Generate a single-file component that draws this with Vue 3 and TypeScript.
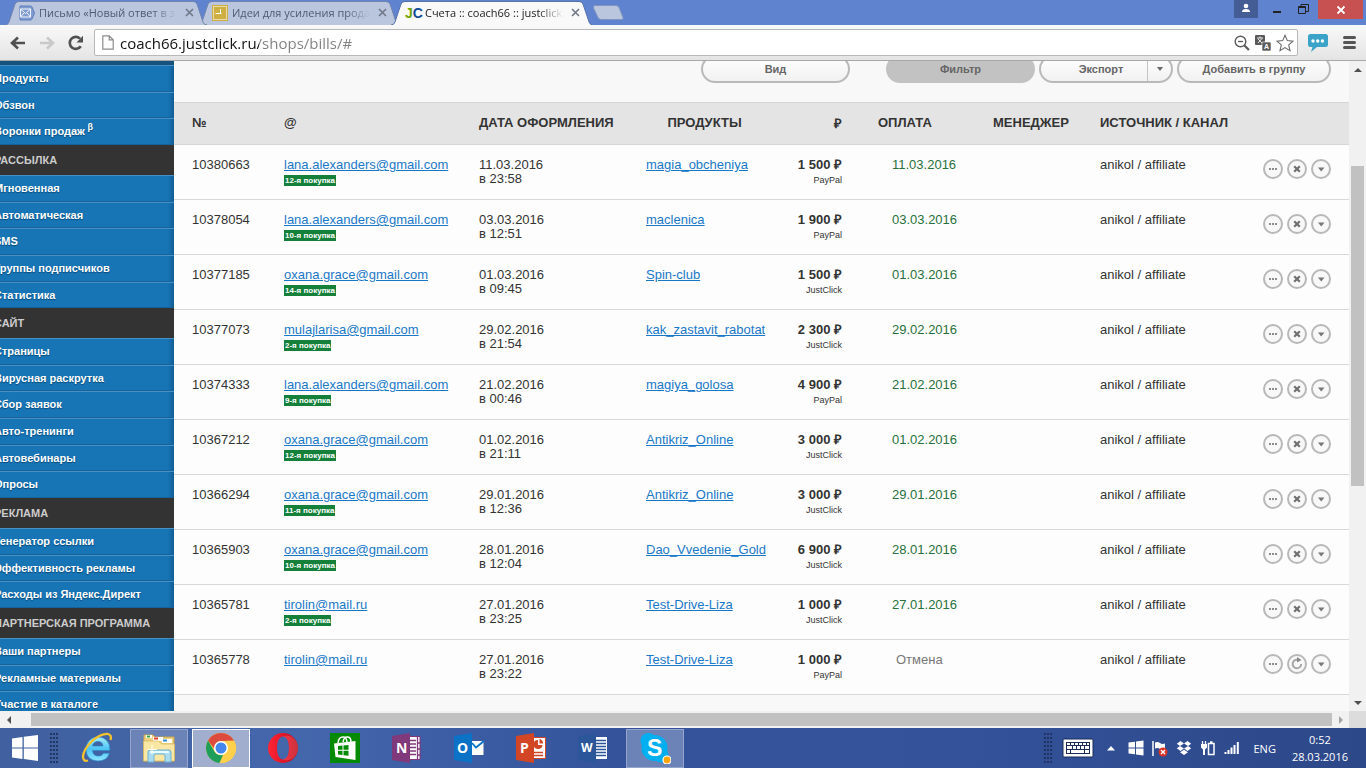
<script setup lang="ts">
interface Bill {
  id: string
  email: string
  badge: string
  date: string
  time: string
  product: string
  price: string
  system: string
  paid: string
  cancelled?: boolean
}

interface MenuGroup {
  title: string
  items: string[]
}

const tabs = [
  { title: 'Письмо «Новый ответ в з', icon: 'mail', active: false },
  { title: 'Идеи для усиления прода', icon: 'clock', active: false },
  { title: 'Счета :: coach66 :: justclick', icon: 'jc', active: true },
]

const menu: MenuGroup[] = [
  { title: '', items: ['Продукты', 'Обзвон', 'Воронки продаж'] },
  { title: 'Рассылка', items: ['Мгновенная', 'Автоматическая', 'SMS', 'Группы подписчиков', 'Статистика'] },
  { title: 'Сайт', items: ['Страницы', 'Вирусная раскрутка', 'Сбор заявок', 'Авто-тренинги', 'Автовебинары', 'Опросы'] },
  { title: 'Реклама', items: ['Генератор ссылки', 'Эффективность рекламы', 'Расходы из Яндекс.Директ'] },
  { title: 'Партнерская программа', items: ['Ваши партнеры', 'Рекламные материалы', 'Участие в каталоге'] },
]

const bills: Bill[] = [
  { id: '10380663', email: 'lana.alexanders@gmail.com', badge: '12-я покупка', date: '11.03.2016', time: '23:58', product: 'magia_obcheniya', price: '1 500', system: 'PayPal', paid: '11.03.2016' },
  { id: '10378054', email: 'lana.alexanders@gmail.com', badge: '10-я покупка', date: '03.03.2016', time: '12:51', product: 'maclenica', price: '1 900', system: 'PayPal', paid: '03.03.2016' },
  { id: '10377185', email: 'oxana.grace@gmail.com', badge: '14-я покупка', date: '01.03.2016', time: '09:45', product: 'Spin-club', price: '1 500', system: 'JustClick', paid: '01.03.2016' },
  { id: '10377073', email: 'mulajlarisa@gmail.com', badge: '2-я покупка', date: '29.02.2016', time: '21:54', product: 'kak_zastavit_rabotat', price: '2 300', system: 'JustClick', paid: '29.02.2016' },
  { id: '10374333', email: 'lana.alexanders@gmail.com', badge: '9-я покупка', date: '21.02.2016', time: '00:46', product: 'magiya_golosa', price: '4 900', system: 'PayPal', paid: '21.02.2016' },
  { id: '10367212', email: 'oxana.grace@gmail.com', badge: '12-я покупка', date: '01.02.2016', time: '21:11', product: 'Antikriz_Online', price: '3 000', system: 'JustClick', paid: '01.02.2016' },
  { id: '10366294', email: 'oxana.grace@gmail.com', badge: '11-я покупка', date: '29.01.2016', time: '12:36', product: 'Antikriz_Online', price: '3 000', system: 'JustClick', paid: '29.01.2016' },
  { id: '10365903', email: 'oxana.grace@gmail.com', badge: '10-я покупка', date: '28.01.2016', time: '12:04', product: 'Dao_Vvedenie_Gold', price: '6 900', system: 'JustClick', paid: '28.01.2016' },
  { id: '10365781', email: 'tirolin@mail.ru', badge: '2-я покупка', date: '27.01.2016', time: '23:25', product: 'Test-Drive-Liza', price: '1 000', system: 'JustClick', paid: '27.01.2016' },
  { id: '10365778', email: 'tirolin@mail.ru', badge: '', date: '27.01.2016', time: '23:22', product: 'Test-Drive-Liza', price: '1 000', system: 'PayPal', paid: 'Отмена', cancelled: true },
]
</script>

<template>
  <div class="desktop">
    <header class="titlebar">
      <div class="tabs">
        <div v-for="tab in tabs" :key="tab.title" class="tab" :class="{ active: tab.active }">
          <svg class="tab-shape" viewBox="0 0 202 25" preserveAspectRatio="none" aria-hidden="true">
            <path d="M0 25 Q3 25 4 22 L10 4 Q11 1.500 14 1.500 L188 1.500 Q191 1.500 192 4 L198 22 Q199 25 202 25" />
          </svg>
          <svg v-if="tab.icon === 'mail'" class="favicon" viewBox="0 0 16 16" aria-hidden="true">
            <path d="M1 1h10.500q1 0 1.500 1l2.500 6-2.500 6q-.5 1-1.500 1H1z" fill="#7f9bd0" stroke="#5f7fbd" />
            <path d="M1.500 4h10v8h-10z" fill="#7f9bd0" stroke="#f3f6fc" />
            <path d="M1.500 4l5 4.500 5-4.500M1.500 12l3.500-4M11.500 12L8 8" fill="none" stroke="#f3f6fc" />
          </svg>
          <svg v-else-if="tab.icon === 'clock'" class="favicon" viewBox="0 0 16 16" aria-hidden="true">
            <rect x=".5" y=".5" width="15" height="15" fill="#cfae42" stroke="#cfae42" />
            <rect x="1.500" y="1.500" width="13" height="13" fill="none" stroke="#eadca9" />
            <path d="M8.500 4v5M3.500 8.500h6" stroke="#fff" fill="none" />
          </svg>
          <span v-else class="favicon jc" aria-hidden="true"><b>J</b><b>C</b></span>
          <span class="tab-title">{{ tab.title }}</span>
          <button class="tab-close" type="button" aria-label="Закрыть вкладку">
            <svg viewBox="0 0 9 9" width="9" height="9"><path d="M1 1l7 7M8 1l-7 7" /></svg>
          </button>
        </div>
        <button class="new-tab" type="button" aria-label="Новая вкладка">
          <svg viewBox="0 0 32 15" width="32" height="15">
            <path d="M3 .5h21q2 0 3 2l4 10q.5 2-1.500 2H9q-2 0-3-2L1.500 3Q1 .5 3 .5z" fill="#b9c6de" stroke="#8095c2" />
          </svg>
        </button>
      </div>
      <div class="window-buttons">
        <button class="user" type="button" aria-label="Пользователь">
          <svg viewBox="0 0 24 18" width="24" height="18"><circle cx="12" cy="6" r="2.300" fill="#fff" /><path d="M8 12q0-3 4-3t4 3z" fill="#fff" /></svg>
        </button>
        <button class="minimize" type="button" aria-label="Свернуть">
          <svg viewBox="0 0 10 18" width="10" height="18"><path d="M1 12h8" stroke="#222" stroke-width="2" /></svg>
        </button>
        <button class="restore" type="button" aria-label="Восстановить">
          <svg viewBox="0 0 11 18" width="11" height="18"><path d="M3 6V4.500h7.500v7H8" fill="none" stroke="#222" /><path d="M.5 6.500h7v7h-7zM.5 7.500h7" fill="none" stroke="#222" /></svg>
        </button>
        <button class="close" type="button" aria-label="Закрыть">
          <svg viewBox="0 0 10 10" width="10" height="10"><path d="M1.500 1.500l7 7M8.500 1.500l-7 7" stroke="#fff" stroke-width="1.800" /></svg>
        </button>
      </div>
    </header>

    <div class="toolbar">
      <div class="nav-buttons">
        <button type="button" aria-label="Назад">
          <svg viewBox="0 0 16 16" width="16" height="16"><path d="M1.500 8H15M8 2.500L2 8l6 5.500" fill="none" stroke="#505050" stroke-width="2.600" /></svg>
        </button>
        <button type="button" aria-label="Вперёд">
          <svg viewBox="0 0 16 16" width="16" height="16"><path d="M1 8h13.500M8 2.500L14 8l-6 5.500" fill="none" stroke="#c9c9c9" stroke-width="2.600" /></svg>
        </button>
        <button type="button" aria-label="Обновить">
          <svg viewBox="0 0 16 16" width="16" height="16"><path d="M12.800 11.200A6 6 0 1 1 12 3.600" fill="none" stroke="#505050" stroke-width="2.600" /><path d="M15 .8V7.500H8.500z" fill="#505050" /></svg>
        </button>
      </div>
      <div class="omnibox">
        <svg viewBox="0 0 12 15" width="12" height="15" aria-hidden="true"><path d="M.8.8h6.400l4 4v9.400H.8zM7.200.8v4h4" fill="#fff" stroke="#8c8c8c" stroke-width="1.200" /></svg>
        <input type="text" class="url" value="coach66.justclick.ru/shops/bills/#" aria-label="Адресная строка" />
        <svg viewBox="0 0 16 16" width="16" height="16" aria-hidden="true"><circle cx="6.500" cy="6.500" r="5.300" fill="none" stroke="#5a5a5a" stroke-width="1.400" /><path d="M4 6.500h5" stroke="#5a5a5a" stroke-width="1.300" /><path d="M10.500 10.500l4.500 4.500" stroke="#5a5a5a" stroke-width="2.200" /></svg>
        <svg class="translate" viewBox="0 0 16 16" width="16" height="16" aria-hidden="true">
          <rect width="10" height="10" rx="1" fill="#5a5a5a" />
          <path d="M2 3h6M5 1.500V3M3 8l4-4.500M3 4l4 4" stroke="#fff" fill="none" stroke-width=".9" />
          <rect x="7" y="7" width="9" height="9" rx="1" fill="#5a5a5a" stroke="#fff" stroke-width=".6" />
          <text x="9" y="14" font-size="7" font-weight="700" fill="#fff">A</text>
        </svg>
        <svg viewBox="0 0 18 18" width="18" height="18" aria-hidden="true"><path d="M9 1.300l2.300 5.300 5.700.5-4.300 3.800 1.300 5.700L9 13.600l-5 3 1.300-5.700L1 7.100l5.700-.5z" fill="#fff" stroke="#6a6a6a" stroke-width="1.100" /></svg>
      </div>
      <button class="chat" type="button" aria-label="Расширение">
        <svg viewBox="0 0 20 18" width="20" height="18"><path d="M2.500 0h15Q20 0 20 2.500v8q0 2.500-2.500 2.500H9l-6 5 1.500-5h-2Q0 13 0 10.500v-8Q0 0 2.500 0z" fill="#3ba3c7" /><circle cx="5" cy="7" r="1.700" fill="#fff" /><circle cx="9.700" cy="7" r="1.700" fill="#fff" /><circle cx="14.400" cy="7" r="1.700" fill="#fff" /></svg>
      </button>
      <button class="menu-button" type="button" aria-label="Меню">
        <svg viewBox="0 0 13 13" width="13" height="13"><path d="M1.500 1.500h10M1.500 6.500h10M1.500 11.500h10" stroke="#555" stroke-width="3" stroke-linecap="round" /></svg>
      </button>
    </div>

    <div class="viewport">
      <nav class="sidebar">
        <div class="sidebar-scroll">
          <section v-for="group in menu" :key="group.title">
            <h2 v-if="group.title">{{ group.title }}</h2>
            <ul>
              <li v-for="item in group.items" :key="item">
                <a href="#">{{ item }}<sup v-if="item === 'Воронки продаж'"> β</sup></a>
              </li>
            </ul>
          </section>
        </div>
      </nav>

      <main class="page">
        <div class="actions-bar">
          <button type="button" class="pill view">Вид</button>
          <button type="button" class="pill pressed">Фильтр</button>
          <div class="pill split">
            <button type="button" class="split-main">Экспорт</button>
            <button type="button" class="split-arrow" aria-label="Варианты экспорта">
              <svg viewBox="0 0 6 4" width="6" height="4"><path d="M0 0h6L3 4z" fill="#666" /></svg>
            </button>
          </div>
          <button type="button" class="pill group">Добавить в группу</button>
        </div>

        <table class="bills">
          <colgroup>
            <col class="c-id" /><col class="c-mail" /><col class="c-date" /><col class="c-product" /><col class="c-price" />
            <col class="c-paid" /><col class="c-manager" /><col class="c-source" /><col class="c-actions" />
          </colgroup>
          <thead>
            <tr>
              <th scope="col" class="id">№</th>
              <th scope="col">@</th>
              <th scope="col">ДАТА ОФОРМЛЕНИЯ</th>
              <th scope="col" class="product">ПРОДУКТЫ</th>
              <th scope="col" class="price">₽</th>
              <th scope="col" class="paid">ОПЛАТА</th>
              <th scope="col">МЕНЕДЖЕР</th>
              <th scope="col">ИСТОЧНИК / КАНАЛ</th>
              <th></th>
            </tr>
          </thead>
          <tbody>
            <tr v-for="bill in bills" :key="bill.id">
              <td class="id">{{ bill.id }}</td>
              <td>
                <a href="#">{{ bill.email }}</a>
                <div v-if="bill.badge" class="badge">{{ bill.badge }}</div>
              </td>
              <td>{{ bill.date }}<br />в {{ bill.time }}</td>
              <td><a href="#">{{ bill.product }}</a></td>
              <td class="price"><b>{{ bill.price }} ₽</b><small>{{ bill.system }}</small></td>
              <td class="paid" :class="{ cancelled: bill.cancelled }">{{ bill.paid }}</td>
              <td></td>
              <td>anikol / affiliate</td>
              <td class="row-actions">
                <div class="round-group">
                  <button type="button" class="round" aria-label="Подробнее">
                    <svg viewBox="0 0 16 16" width="16" height="16"><path d="M4 8h2M7 8h2M10 8h2" stroke="#8c8c8c" stroke-width="2" /></svg>
                  </button>
                  <button v-if="bill.cancelled" type="button" class="round" aria-label="Восстановить счёт">
                    <svg viewBox="0 0 16 16" width="16" height="16"><path d="M12.200 8a4.300 4.300 0 1 1-4-4.300" fill="none" stroke="#a5a5a5" stroke-width="1.900" /><path d="M8 1l4.500 3L8 6.500z" fill="#888" /></svg>
                  </button>
                  <button v-else type="button" class="round" aria-label="Отменить">
                    <svg viewBox="0 0 16 16" width="16" height="16"><path d="M5.200 5.200l5.600 5.600M10.800 5.200l-5.600 5.600" stroke="#707070" stroke-width="2.200" /></svg>
                  </button>
                  <button type="button" class="round" aria-label="Ещё">
                    <svg viewBox="0 0 16 16" width="16" height="16"><path d="M5 6.500h6.500L8.200 10.500z" fill="#777" /></svg>
                  </button>
                </div>
              </td>
            </tr>
          </tbody>
        </table>
      </main>

      <div class="vscroll" aria-hidden="true">
        <div class="arrow"><svg viewBox="0 0 8 4" width="8" height="4"><path d="M0 4h8L4 0z" fill="#505050" /></svg></div>
        <div class="before"></div>
        <div class="thumb"></div>
        <div class="after"></div>
        <div class="arrow"><svg viewBox="0 0 8 4" width="8" height="4"><path d="M0 0h8L4 4z" fill="#505050" /></svg></div>
      </div>
    </div>

    <div class="hscroll" aria-hidden="true">
      <div class="harrow"><svg viewBox="0 0 4 8" width="4" height="8"><path d="M4 0v8L0 4z" fill="#505050" /></svg></div>
      <div class="hthumb"></div>
      <div class="harrow"><svg viewBox="0 0 4 8" width="4" height="8"><path d="M0 0v8l4-4z" fill="#a3a3a3" /></svg></div>
      <div class="corner"></div>
    </div>

    <footer class="taskbar">
      <button type="button" class="start" aria-label="Пуск">
        <svg viewBox="0 0 26 26" width="26" height="26"><path d="M0 3.500L10.500 2v10.400H0zM11.800 1.800L26 0v12.400H11.800zM0 13.600h10.500V24L0 22.600zM11.800 13.600H26V26l-14.200-1.900z" fill="#fff" /></svg>
      </button>
      <div class="grip"></div>
      <div class="apps">
        <button type="button" class="app" aria-label="Internet Explorer">
          <svg viewBox="0 0 32 32" width="32" height="32">
            <defs><linearGradient id="ie" x2="0" y2="1"><stop offset="0" stop-color="#a8ecff" /><stop offset=".5" stop-color="#4cc4f5" /><stop offset="1" stop-color="#8fe6ff" /></linearGradient></defs>
            <path d="M29 18.500H11.500Q12 24 17.500 24q3.500 0 5-2.800h6Q26 29 17 29 5.500 28.500 5 17.500 5.500 5.500 17 5q12 .5 12 13.500zM11.500 14H22q-.5-4.500-5-4.500T11.500 14z" fill="url(#ie)" stroke="#2a86c8" stroke-width=".7" />
            <path d="M29.500 8Q31 3 27 2 20 1.500 11 9 2.500 17.500 2 24.500 2 30 7 28.500" fill="none" stroke="#f4c22d" stroke-width="2.300" />
          </svg>
        </button>
        <button type="button" class="app open" aria-label="Проводник">
          <svg viewBox="0 0 34 32" width="34" height="32">
            <path d="M2 3h9l2 2h19v24H2z" fill="#efd27d" stroke="#c9a64c" />
            <path d="M4 3h6v3H4z" fill="#fff" /><path d="M5 3.500h3v2H5z" fill="#2fa83f" />
            <path d="M11 5h10v4H11z" fill="#fff" /><path d="M12 5.500h4v2h-4z" fill="#dd3d2e" />
            <path d="M20 7h10v4H20z" fill="#fff" /><path d="M21 7.500h4v2h-4z" fill="#328bd4" />
            <path d="M1.500 9h15l3 3h13v17h-31z" fill="#fae7a4" stroke="#d7b65c" stroke-width=".7" />
            <path d="M6 30V20q0-2 2-2h19q2 0 2 2v10h-6v-6q0-2-2-2h-7q-2 0-2 2v6z" fill="#a9dcef" stroke="#6eb2d4" />
            <path d="M8 20h19" stroke="#e8faff" stroke-width="2" /><path d="M10 13v9M6 17.500h9" stroke="#fffbe8" stroke-width="1.200" />
          </svg>
        </button>
        <button type="button" class="app open focused" aria-label="Chrome">
          <svg viewBox="0 0 32 32" width="32" height="32">
            <circle cx="16" cy="16" r="15" fill="#fcd04b" />
            <path d="M3 8.500A15 15 0 0 1 29 8.500L16 9q-6 0-6.500 8z" fill="#dc4b3e" />
            <path d="M3 8.500L9.800 20q3 4 8.200 3L14.500 31A15 15 0 0 1 3 8.500z" fill="#1e9e59" />
            <path d="M15.500 9H29.300A15 15 0 0 1 14.500 31l7.500-12z" fill="#fcd04b" />
            <circle cx="16" cy="16" r="7" fill="#fff" /><circle cx="16" cy="16" r="5.500" fill="#4387ee" />
          </svg>
        </button>
        <button type="button" class="app" aria-label="Opera">
          <svg viewBox="0 0 32 32" width="32" height="32">
            <defs><linearGradient id="opera"><stop offset="0" stop-color="#ff2535" /><stop offset=".55" stop-color="#e01425" /><stop offset="1" stop-color="#a3101c" /></linearGradient></defs>
            <path fill-rule="evenodd" d="M16 1a15 15 0 1 0 0 30 15 15 0 1 0 0-30zM16 4.500c3.800 0 6 5 6 11.500s-2.200 11.500-6 11.500S10 22.500 10 16 12.200 4.500 16 4.500z" fill="url(#opera)" />
            <path d="M16 4.500q5-2 9 .5 6 4 6 11t-6 11q-4 2.500-9 .5 6-1 6-11.500T16 4.500z" fill="#ff5a66" opacity=".45" />
          </svg>
        </button>
        <button type="button" class="app" aria-label="Магазин">
          <svg viewBox="0 0 32 32" width="32" height="32">
            <rect x="1" y="1" width="30" height="30" fill="#048a04" />
            <path d="M5 11.500L26.500 9v19L6.500 25z" fill="#fff" />
            <path d="M9 11q.5-6 5-6 3.500 0 4 5M14 10q1-5.500 5-5 3 .5 3 5" fill="none" stroke="#fff" stroke-width="1.500" />
            <path d="M9 14l4.500-.4v4.200H9zM14.500 13.500l5-.5v4.800h-5zM9 18.800h4.500V23L9 22.500zM14.500 18.800h5v5l-5-.6z" fill="#048a04" />
          </svg>
        </button>
        <button type="button" class="app" aria-label="OneNote">
          <svg viewBox="0 0 32 32" width="32" height="32">
            <path d="M17 4.500h12v23H17z" fill="#fff" stroke="#80397b" />
            <path d="M18 8.500h7M18 12h7M18 15.500h7M18 19h7M18 22.500h7M26.500 5v22M27 11h3M27 17h3M27 23h3" stroke="#80397b" stroke-width="1.300" />
            <path d="M1 4L19 1v30L1 28z" fill="#80397b" /><text x="5" y="21" font-size="14" font-weight="700" fill="#fff">N</text>
          </svg>
        </button>
        <button type="button" class="app" aria-label="Outlook">
          <svg viewBox="0 0 32 32" width="32" height="32">
            <path d="M18 9h12.500v14H18z" fill="#fff" /><path d="M19 11l4 4.500L31 9" fill="none" stroke="#0c72c6" stroke-width="1.800" />
            <path d="M1 4L19 1v30L1 28z" fill="#0c72c6" /><text x="4" y="21" font-size="14" font-weight="700" fill="#fff">O</text>
          </svg>
        </button>
        <button type="button" class="app" aria-label="PowerPoint">
          <svg viewBox="0 0 32 32" width="32" height="32">
            <path d="M17 5.500h13.500v21H17z" fill="#fff" stroke="#d24625" />
            <path d="M23 8v5h4.500a4.500 4.500 0 1 1-4.500-5z" fill="#d24625" /><path d="M24.500 7q3.500.5 3.500 4.500h-3.500z" fill="#d24625" /><path d="M19 20.500h9M19 23.500h9" stroke="#d24625" stroke-width="1.400" />
            <path d="M1 4L19 1v30L1 28z" fill="#d24625" /><text x="5" y="21" font-size="14" font-weight="700" fill="#fff">P</text>
          </svg>
        </button>
        <button type="button" class="app" aria-label="Word">
          <svg viewBox="0 0 32 32" width="32" height="32">
            <path d="M18 5h12v22H18z" fill="#fff" />
            <path d="M19 8.500h10M19 11.500h10M19 14.500h10M19 17.500h10M19 20.500h10M19 23.500h10" stroke="#2b579a" stroke-width="1.400" />
            <path d="M1 4L19 1v30L1 28z" fill="#2b579a" /><text x="4" y="20" font-size="12" font-weight="700" fill="#fff">W</text>
          </svg>
        </button>
        <button type="button" class="app open" aria-label="Skype">
          <svg viewBox="0 0 32 32" width="32" height="32">
            <circle cx="9.500" cy="9" r="8" fill="#00aff0" /><circle cx="22" cy="23" r="7.500" fill="#00aff0" /><circle cx="15.500" cy="16" r="13" fill="#00aff0" />
            <text class="skype" x="8" y="24" font-size="23" font-weight="700" fill="#fff">S</text>
            <circle cx="28" cy="28" r="4" fill="#ffa50a" stroke="#fff" stroke-width="1.200" />
          </svg>
        </button>
      </div>
      <div class="tray">
        <div class="grip"></div>
        <svg class="keyboard" viewBox="0 0 32 20" width="32" height="20" aria-hidden="true"><rect x="1" y="1" width="30" height="18" rx="1" fill="#fff" stroke="#1b2c56" /><path d="M4 4h24v12H4z" fill="#1b2c56" /><path d="M5 5h3v2H5zM9 5h3v2H9zM13 5h3v2h-3zM17 5h3v2h-3zM21 5h3v2h-3zM25 5h2v2h-2zM5 8h5v3H5zM11 8h3v3h-3zM15 8h3v3h-3zM19 8h3v3h-3zM23 8h4v3h-4zM5 12h3v3H5zM9 12h13v3H9zM23 12h4v3h-4z" fill="#fff" /></svg>
        <svg class="up" viewBox="0 0 8 5" width="8" height="5" aria-hidden="true"><path d="M0 4.500h8L4 0z" fill="#fff" /></svg>
        <svg class="win" viewBox="0 0 16 16" width="16" height="16" aria-hidden="true"><path d="M.5 2.500L7 1.700v5.800H.5zM8 1.500l7.500-1v7H8zM.5 8.500H7v5.800l-6.500-.8zM8 8.500h7.500v7L8 14.500z" fill="#fff" /></svg>
        <svg class="flag" viewBox="0 0 16 17" width="16" height="17" aria-hidden="true"><path d="M1 1v15" stroke="#fff" stroke-width="1.500" /><path d="M3 2.500q3-1 5 .5t5 .5v6q-3 1-5-.5t-5-.5z" fill="#fff" /><circle cx="11" cy="12" r="4.500" fill="#d8322a" /><path d="M9 10l4 4M13 10l-4 4" stroke="#fff" stroke-width="1.400" /></svg>
        <svg class="dropbox" viewBox="0 0 16 16" width="16" height="16" aria-hidden="true"><path d="M4.500 1L8 3.500 4 6 .8 3.800zM11.500 1l3.700 2.800L12 6 8 3.500zM4 6l4 2.600L4.500 11 .8 8.200zM12 6l3.200 2.200-3.700 2.800L8 8.600zM4 12.200L8 9.800l4 2.400-4 2.800z" fill="#fff" /></svg>
        <svg class="power" viewBox="0 0 16 16" width="16" height="16" aria-hidden="true"><path d="M2.500 1v3M5.500 1v3" stroke="#fff" stroke-width="1.300" /><path d="M1 4h6v3.500L5 9.500V15H3V9.500L1 7.500z" fill="#fff" /><path d="M8.500 3.500h5.500v11H8.500zM10 2h2.500" fill="none" stroke="#fff" stroke-width="1.500" /></svg>
        <svg class="signal" viewBox="0 0 16 14" width="16" height="14" aria-hidden="true"><path d="M1.500 11v2M4.500 9v4M7.500 6.500V13M10.500 4v9M13.800 1v12" stroke="#fff" stroke-width="2" /></svg>
        <button type="button" class="lang">ENG</button>
        <div class="clock"><span>0:52</span><span>28.03.2016</span></div>
      </div>
    </footer>
  </div>
</template>

<style>
body {
  margin: 0;
  overflow: hidden;
}
</style>

<style scoped>
* {
  box-sizing: border-box;
}
.desktop {
  display: flex;
  flex-direction: column;
  height: 100vh;
  overflow: hidden;
  font-family: "Liberation Sans", Arial, sans-serif;
  font-size: 13px;
  color: #333;
}
button {
  display: flex;
  align-items: center;
  justify-content: center;
  padding: 0;
  border: 0;
  background: none;
  font-family: inherit;
  color: inherit;
}
svg {
  display: block;
  flex: none;
}

/* window frame */
.titlebar {
  display: flex;
  justify-content: space-between;
  flex: none;
  height: 25px;
  background: #5f83cf;
  font-family: "Open Sans", "Noto Sans", sans-serif;
}
.tabs {
  display: flex;
  align-items: center;
  padding-left: 5px;
  min-width: 0;
}
.tab {
  position: relative;
  display: flex;
  align-items: center;
  width: 202px;
  height: 25px;
  margin-right: -9px;
  padding-left: 14px;
  color: #4f5a74;
}
.tab:nth-child(1) {
  z-index: 1;
}
.tab.active {
  z-index: 2;
  color: #222;
}
.tab-shape {
  position: absolute;
  inset: 0;
  width: 100%;
  height: 100%;
  fill: #b9c6de;
  stroke: #7284ae;
}
.tab.active .tab-shape {
  fill: #f9f9f9;
  stroke: #5872aa;
}
.favicon {
  position: relative;
  flex: none;
  width: 16px;
  height: 16px;
}
.jc {
  font: 700 14px/16px "Liberation Sans", sans-serif;
  white-space: nowrap;
}
.jc b:first-child {
  color: #73a500;
}
.jc b:last-child {
  color: #114a94;
}
.tab-title {
  position: relative;
  width: 142px;
  margin-left: 4px;
  overflow: hidden;
  white-space: nowrap;
  font-size: 11px;
  line-height: 18px;
  mask-image: linear-gradient(90deg, #000 114px, transparent 138px);
}
.tab-close {
  position: relative;
  width: 17px;
  height: 17px;
}
.tab-close path {
  fill: none;
  stroke: #707888;
  stroke-width: 1.600;
}
.new-tab {
  margin-left: 8px;
}
.window-buttons {
  display: flex;
  align-items: flex-start;
  padding-right: 3px;
}
.user {
  height: 18px;
  background: #445d95;
}
.minimize {
  margin-left: 14px;
}
.restore {
  margin-left: 16px;
}
.close {
  width: 45px;
  height: 19px;
  margin-left: 9px;
  background: #c75050;
}

/* browser toolbar */
.toolbar {
  display: flex;
  align-items: center;
  flex: none;
  height: 36px;
  padding: 0 10px;
  border-bottom: 1px solid #a8a8a8;
  background: linear-gradient(#f9f9f9, #e4e4e4);
}
.nav-buttons {
  display: flex;
  gap: 13px;
}
.omnibox {
  display: flex;
  align-items: center;
  flex: 1;
  height: 27px;
  margin-left: 10px;
  padding: 0 3px 0 7px;
  border: 1px solid #b8b8b8;
  border-radius: 2px;
  background: #fff;
}
.url {
  flex: 1;
  min-width: 0;
  height: 24px;
  margin-left: 6px;
  padding: 0;
  border: 0;
  outline: 0;
  font: 15px "Open Sans", "Noto Sans", sans-serif;
  color: transparent;
  background: linear-gradient(90deg, #111 139px, #808080 139px);
  background-clip: text;
}
.translate {
  margin: 0 5px;
  font-family: "Liberation Sans", sans-serif;
}
.chat {
  margin-left: 10px;
}
.menu-button {
  margin-left: 15px;
}

/* page */
.viewport {
  display: flex;
  flex: 1;
  min-height: 0;
}
.sidebar {
  flex: none;
  width: 174px;
  overflow: hidden;
  background: #1774b5;
}
.sidebar-scroll {
  margin-left: -24px;
  padding-top: 4px;
  background: linear-gradient(#17527f 4px, transparent 4px);
}
.sidebar h2 {
  height: 30px;
  margin: 0;
  padding-left: 18px;
  background: #333;
  color: #ccc;
  font-size: 11px;
  line-height: 30px;
  text-transform: uppercase;
  white-space: nowrap;
}
.sidebar ul {
  margin: 0;
  padding: 0;
  list-style: none;
}
.sidebar li {
  height: 27px;
  padding-left: 18px;
  border-top: 1px solid #4690c4;
  border-bottom: 1px solid #15639a;
  background: linear-gradient(90deg, transparent 192px, #125d93);
  line-height: 24px;
  white-space: nowrap;
}
.sidebar li:nth-child(3n + 2) {
  height: 26px;
}
.sidebar a {
  color: #fff;
  font-size: 11px;
  font-weight: 700;
  text-decoration: none;
  text-shadow: 0 1px 1px #0b4a78;
}
.sidebar sup {
  font-size: 9px;
  line-height: 0;
}
.page {
  flex: 1;
  min-width: 0;
  overflow: hidden;
  background: #f8f8f8;
}
.actions-bar {
  display: flex;
  justify-content: flex-end;
  gap: 4px;
  height: 41px;
  padding-right: 18px;
}
.pill {
  width: 149px;
  height: 28px;
  margin-top: -6px;
  border: 2px solid #b9b9b9;
  border-radius: 14px;
  background: linear-gradient(#fff, #f1f1f1);
  font-size: 11px;
  font-weight: 700;
  color: #666;
}
.view {
  margin-right: 32px;
}
.pressed {
  border-color: #c2c2c2;
  background: #c2c2c2;
}
.split {
  display: flex;
  width: 134px;
}
.split button {
  font-size: 11px;
  font-weight: 700;
}
.split-main {
  flex: 1;
  padding-left: 14px;
}
.split-arrow {
  width: 24px;
  border-left: 1px solid #c4c4c4;
}
.pill.group {
  width: 154px;
}

.bills {
  width: 100%;
  table-layout: fixed;
  border-collapse: separate;
  border-spacing: 0;
  background: #fdfdfd;
}
.c-id {
  width: 98px;
}
.c-mail {
  width: 195px;
}
.c-date {
  width: 167px;
}
.c-product {
  width: 129px;
}
.c-price {
  width: 91px;
}
.c-paid {
  width: 127px;
}
.c-manager {
  width: 107px;
}
.c-actions {
  width: 98px;
}
.bills th {
  height: 43px;
  padding: 0 0 2px 12px;
  border: solid #d6d6d6;
  border-width: 1px 0;
  background: #e4e4e4;
  font-size: 13px;
  font-weight: 700;
  text-align: left;
  white-space: nowrap;
}
.bills td {
  height: 55px;
  padding: 13px 0 0 12px;
  border-bottom: 1px solid #d8d8d8;
  line-height: 14px;
  vertical-align: top;
  white-space: nowrap;
}
.bills .id {
  padding-left: 18px;
}
.bills th.product {
  text-align: center;
}
.bills .price {
  padding-right: 12px;
  text-align: right;
}
.bills th.paid {
  padding-left: 24px;
}
.bills td.paid {
  padding-left: 38px;
  color: #28713c;
}
.bills td.cancelled {
  padding-left: 42px;
  color: #777;
}
.bills a {
  color: #1a78c8;
  text-decoration: underline;
}
.bills small {
  display: block;
  font-size: 9px;
  line-height: 16px;
}
.badge {
  width: max-content;
  margin-top: 3px;
  padding: 0 1px;
  background: #15803a;
  color: #fff;
  font-size: 8px;
  font-weight: 700;
  line-height: 11px;
}
.round-group {
  display: flex;
  justify-content: flex-end;
  gap: 4px;
  padding: 1px 18px 0 0;
}
.round {
  width: 20px;
  height: 20px;
  border: 2px solid #b8b8b8;
  border-radius: 50%;
  background: #f8f8f8;
}

/* scroll bars */
.vscroll {
  display: flex;
  flex-direction: column;
  flex: none;
  width: 17px;
  background: #f1f1f1;
}
.arrow {
  display: flex;
  align-items: center;
  justify-content: center;
  height: 17px;
}
.before {
  flex: 88;
}
.thumb {
  flex: 320;
  margin: 0 2px;
  background: #c1c1c1;
}
.after {
  flex: 208;
}
.hscroll {
  display: flex;
  flex: none;
  height: 17px;
  background: #f1f1f1;
}
.harrow {
  display: flex;
  align-items: center;
  justify-content: center;
  width: 17px;
}
.hthumb {
  flex: 1;
  margin: 2px 0 2px 14px;
  background: #c1c1c1;
}
.corner {
  width: 17px;
  background: #dcdcdc;
}

/* taskbar */
.taskbar {
  display: flex;
  align-items: center;
  flex: none;
  height: 40px;
  background: linear-gradient(90deg, #40609f, #4466ab 22%, #34539b 45%, #33529a 70%, #2d4888);
  color: #fff;
  font-family: "Open Sans", "Noto Sans", sans-serif;
}
.start {
  width: 50px;
  height: 40px;
}
.grip {
  width: 8px;
  height: 30px;
  background: radial-gradient(circle at 1px 1px, #1c2d58 1px, transparent 1px) 0 0 / 3px 4px;
  opacity: 0.8;
}
.apps {
  display: flex;
  gap: 4px;
  margin-left: 10px;
}
.app {
  width: 58px;
  height: 39px;
}
.app.open {
  border: 1px solid #95a5cb;
  background: #6c83b7;
}
.app.focused {
  border: 1px solid #fff;
  background: #a1aecd;
}
.skype {
  font-family: "Liberation Sans", sans-serif;
}
.tray {
  display: flex;
  align-items: center;
  margin-left: auto;
  padding-right: 18px;
  font-size: 11px;
}
.keyboard {
  margin-left: 10px;
}
.up {
  margin-left: 13px;
}
.win {
  margin-left: 13px;
}
.flag,
.dropbox,
.power,
.signal {
  margin-left: 8px;
}
.lang {
  margin-left: 13px;
  font-size: 11px;
}
.clock {
  display: flex;
  flex-direction: column;
  align-items: center;
  margin-left: 16px;
  line-height: 17px;
}
</style>
